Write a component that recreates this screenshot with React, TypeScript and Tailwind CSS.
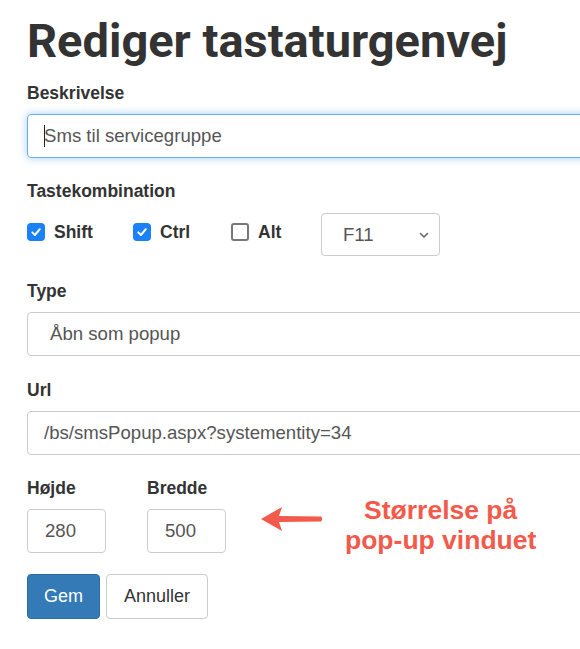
import React from "react";

const labelCls = "block text-[17.5px] leading-[20px] font-bold text-[#333] font-['Liberation_Sans',Arial,sans-serif]";
const fieldFont = "font-['Liberation_Sans',Arial,sans-serif] text-[18.6px] text-[#555]";

function Check({ checked, label, w }: { checked: boolean; label: string; w: string }) {
  return (
    <div className={`flex items-center ${w}`}>
      {checked ? (
        <span className="flex h-[18px] w-[18px] items-center justify-center rounded-[4px] bg-[#1a82f6]">
          <svg width="12" height="12" viewBox="0 0 12 12" fill="none">
            <path d="M2.3 6.4 L4.9 9 L9.8 3.2" stroke="white" strokeWidth="2" strokeLinecap="round" strokeLinejoin="round" />
          </svg>
        </span>
      ) : (
        <span className="h-[18px] w-[18px] rounded-[3px] border-2 border-[#777] bg-white" />
      )}
      <span className="ml-[9px] text-[17.5px] font-bold text-[#333] font-['Liberation_Sans',Arial,sans-serif]">{label}</span>
    </div>
  );
}

export default function App() {
  return (
    <div className="w-[580px] h-[649px] overflow-hidden bg-white">
      <div className="w-[640px] pl-[27px]">
        <h1 className="mt-[13px] text-[47px] leading-[56px] font-bold text-[#333] font-['Roboto',sans-serif]">
          Rediger tastaturgenvej
        </h1>

        <label className={`${labelCls} mt-[14px]`}>Beskrivelse</label>
        <div
          className={`mt-[11px] flex h-[44px] items-center rounded-[4px] border border-[#66afe9] pl-[16px] shadow-[0_0_8px_rgba(102,175,233,0.6)] ${fieldFont}`}
        >
          <span className="mr-[-1px] inline-block h-[22px] w-px bg-[#222]" />
          Sms til servicegruppe
        </div>

        <label className={`${labelCls} mt-[23px]`}>Tastekombination</label>
        <div className="mt-[12px] flex items-center">
          <div className="mb-[5px] flex items-center">
            <Check checked label="Shift" w="w-[106px]" />
            <Check checked label="Ctrl" w="w-[98px]" />
            <Check checked={false} label="Alt" w="w-[90px]" />
          </div>
          <div
            className={`flex h-[43px] w-[119px] items-center justify-between rounded-[4px] border border-[#ccc] pl-[21px] pr-[10px] ${fieldFont}`}
          >
            <span>F11</span>
            <svg width="10" height="8" viewBox="0 0 10 8" fill="none">
              <path d="M1.5 2.5 L5 6 L8.5 2.5" stroke="#666" strokeWidth="1.6" strokeLinecap="round" strokeLinejoin="round" />
            </svg>
          </div>
        </div>

        <label className={`${labelCls} mt-[25px]`}>Type</label>
        <div className={`mt-[11px] flex h-[44px] items-center rounded-[4px] border border-[#ccc] pl-[22px] ${fieldFont}`}>
          Åbn som popup
        </div>

        <label className={`${labelCls} mt-[24px]`}>Url</label>
        <div className={`mt-[11px] flex h-[44px] items-center rounded-[4px] border border-[#ccc] pl-[16px] ${fieldFont}`}>
          /bs/smsPopup.aspx?systementity=34
        </div>

        <div className="mt-[23px] flex h-[75px] items-start">
          <div className="w-[120px]">
            <label className={labelCls}>Højde</label>
            <div className={`mt-[11px] flex h-[44px] w-[79px] items-center rounded-[4px] border border-[#ccc] pl-[17px] ${fieldFont}`}>
              280
            </div>
          </div>
          <div className="w-[79px]">
            <label className={labelCls}>Bredde</label>
            <div className={`mt-[11px] flex h-[44px] w-[79px] items-center rounded-[4px] border border-[#ccc] pl-[17px] ${fieldFont}`}>
              500
            </div>
          </div>
          <svg className="ml-[34px] mt-[27px]" width="64" height="28" viewBox="0 0 64 28" fill="none">
            <path d="M1 14 L22 2 L19 11 L61 11.5 Q63.5 14 61 16.5 L19 17 L22 26 Z" fill="#f25a4b" />
          </svg>
          <div className="ml-[21px] mt-[17px] text-center text-[26.5px] leading-[30px] font-bold text-[#f25a4b] font-['Liberation_Sans',Arial,sans-serif]">
            Størrelse på
            <br />
            pop-up vinduet
          </div>
        </div>

        <div className="mt-[21px] flex gap-[6px] font-['Liberation_Sans',Arial,sans-serif] text-[18px]">
          <button className="h-[45px] w-[73px] rounded-[4px] border border-[#2e6da4] bg-[#337ab7] text-white">Gem</button>
          <button className="h-[45px] w-[102px] rounded-[4px] border border-[#ccc] bg-white text-[#333]">Annuller</button>
        </div>
      </div>
    </div>
  );
}
